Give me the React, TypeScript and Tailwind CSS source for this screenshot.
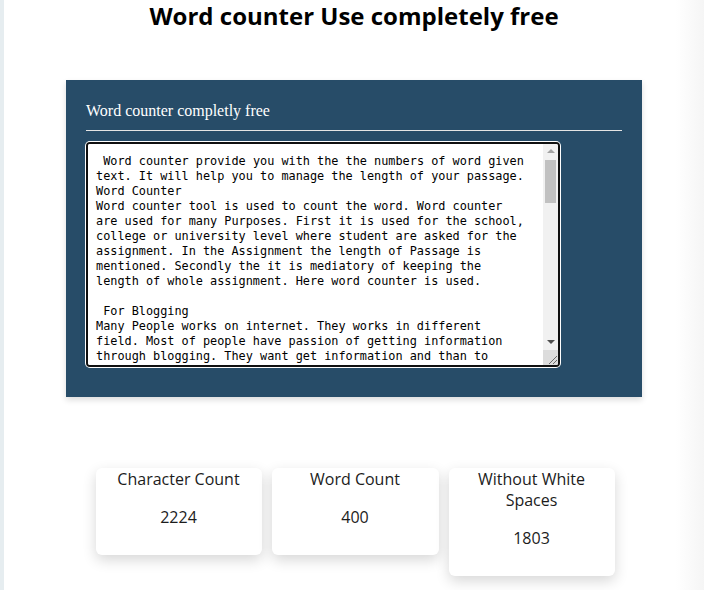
import { useEffect, useRef, useState } from "react";

const initialText = ` Word counter provide you with the the numbers of word given
text. It will help you to manage the length of your passage.
Word Counter
Word counter tool is used to count the word. Word counter
are used for many Purposes. First it is used for the school,
college or university level where student are asked for the
assignment. In the Assignment the length of Passage is
mentioned. Secondly the it is mediatory of keeping the
length of whole assignment. Here word counter is used.

 For Blogging
Many People works on internet. They works in different
field. Most of people have passion of getting information
through blogging. They want get information and than to
share it with other people. Blogger write the articles and
post them on their website. Every article have a length
which is decided by the blogger or by the owner of website.
So word counter help them to write the article of correct
length.

 For Content Writing
Content writer write the content for different websites.
Every client ask for the specific number of words in the
content. Word counter tool tell the writer how many words
are written and how many characters are used in the text.

 For Social Media
Many social media websites have the limit of characters in
a post. Word counter is used to check the characters before
posting the text on the social media.

 For Students
Student use the word counter when they write the essay or
the report. Teacher ask for the fixed number of words and
student can check it here before submit the work.

 For Translators
Translator are paid by the number of words. They count the
words of the document and tell the price to the client.

 For Search Engine
Search engine like the article which have good length. The
title and the description also have the limit of characters.

 How to use
Just paste or type your text in the box above. The tool
count the words, the characters and the characters without
white spaces automatically. It is completely free.

 Why use it
It is fast and easy. No need to install any software or
create the account. Your text is not saved anywhere.

 For Letters
Many office need the letter of the fixed length. Word
counter help to write the letter in the correct size.

 Thank you
Thank you for using the word counter. Share it with your
friends if you like it.`;

type Counts = { chars: number; words: number; noSpaces: number };

function countText(text: string): Counts {
  return {
    chars: text.length,
    words: text.trim() ? text.trim().split(/\s+/).length : 0,
    noSpaces: text.replace(/\s/g, "").length,
  };
}

function StatCard({ label, value, width }: { label: string; value: number; width: string }) {
  return (
    <div className={`${width} rounded-[6px] bg-white px-[12px] pt-[1px] pb-[27px] text-center text-[16px] leading-[21px] text-[#1c1c1c] shadow-[0_5px_14px_rgba(0,0,0,0.16)]`}>
      <p>{label}</p>
      <p className="mt-[17px]">{value}</p>
    </div>
  );
}

const TRACK = 177;

export default function App() {
  const [counts, setCounts] = useState<Counts>({ chars: 2224, words: 400, noSpaces: 1803 });
  const [thumb, setThumb] = useState({ top: 0, size: 40 });
  const boxRef = useRef<HTMLTextAreaElement>(null);

  const updateThumb = () => {
    const el = boxRef.current;
    if (!el) return;
    const size = Math.max(20, Math.round((el.clientHeight / el.scrollHeight) * TRACK));
    const max = el.scrollHeight - el.clientHeight;
    const top = max > 0 ? Math.round((el.scrollTop / max) * (TRACK - size)) : 0;
    setThumb({ top, size });
  };

  useEffect(updateThumb, []);

  const scrollBy = (dy: number) => {
    boxRef.current?.scrollBy({ top: dy });
  };

  return (
    <div className="flex min-h-screen font-['Open_Sans',sans-serif]">
      <div className="w-[4px] shrink-0 bg-[#e6edf0]" />
      <main className="flex flex-1 flex-col items-center bg-[linear-gradient(90deg,#ffffff_calc(100%-28px),#f5f5f5)] pb-[14px]">
        <h1 className="text-[24px] leading-[32px] font-bold text-black">Word counter Use completely free</h1>

        <section className="mt-[48px] w-[576px] bg-[#274c68] px-[20px] pt-[19px] pb-[30px] shadow-[0_3px_6px_rgba(0,0,0,0.14)]">
          <h2 className="font-['Liberation_Serif',serif] text-[16px] leading-[24px] text-white">
            Word counter completly free
          </h2>
          <hr className="mt-[7px] border-t border-[#e4e4e4]" />

          <div className="mt-[11px] flex h-[225px] w-[474px] overflow-hidden rounded-[4px] border-2 border-[#101010] bg-white shadow-[0_0_0_1px_#ffffff]">
            <textarea
              ref={boxRef}
              defaultValue={initialText}
              spellCheck={false}
              onScroll={updateThumb}
              onChange={(e) => {
                setCounts(countText(e.target.value));
                updateThumb();
              }}
              className="h-full min-w-0 flex-1 resize-none overflow-y-auto bg-white pt-[10px] pl-[8px] pr-[4px] font-['DejaVu_Sans_Mono',monospace] text-[11.85px] leading-[15px] text-black outline-none [scrollbar-width:none]"
            />
            <div className="flex w-[15px] shrink-0 flex-col bg-[#f1f1f1]">
              <button onClick={() => scrollBy(-40)} className="flex h-[15px] items-center justify-center">
                <svg width="8" height="5" viewBox="0 0 8 5">
                  <polygon points="0,4 4,0 8,4" fill="#a3a3a3" />
                </svg>
              </button>
              <div className="flex-1 px-[2px] pt-[1px]">
                <div className="bg-[#c1c1c1]" style={{ marginTop: thumb.top, height: thumb.size }} />
              </div>
              <button onClick={() => scrollBy(40)} className="flex h-[15px] items-center justify-center">
                <svg width="8" height="5" viewBox="0 0 8 5">
                  <polygon points="0,0 8,0 4,4" fill="#505050" />
                </svg>
              </button>
              <div className="flex h-[15px] items-end justify-end bg-[#dcdcdc]">
                <svg width="10" height="10" viewBox="0 0 10 10">
                  <path d="M1 9 L9 1 M5 9 L9 5" stroke="#6a6a6a" strokeWidth="1" />
                </svg>
              </div>
            </div>
          </div>
        </section>

        <div className="mt-[71px] flex items-start gap-[10px] pl-[2px]">
          <StatCard label="Character Count" value={counts.chars} width="w-[166px]" />
          <StatCard label="Word Count" value={counts.words} width="w-[167px]" />
          <StatCard label="Without White Spaces" value={counts.noSpaces} width="w-[166px]" />
        </div>
      </main>
    </div>
  );
}
